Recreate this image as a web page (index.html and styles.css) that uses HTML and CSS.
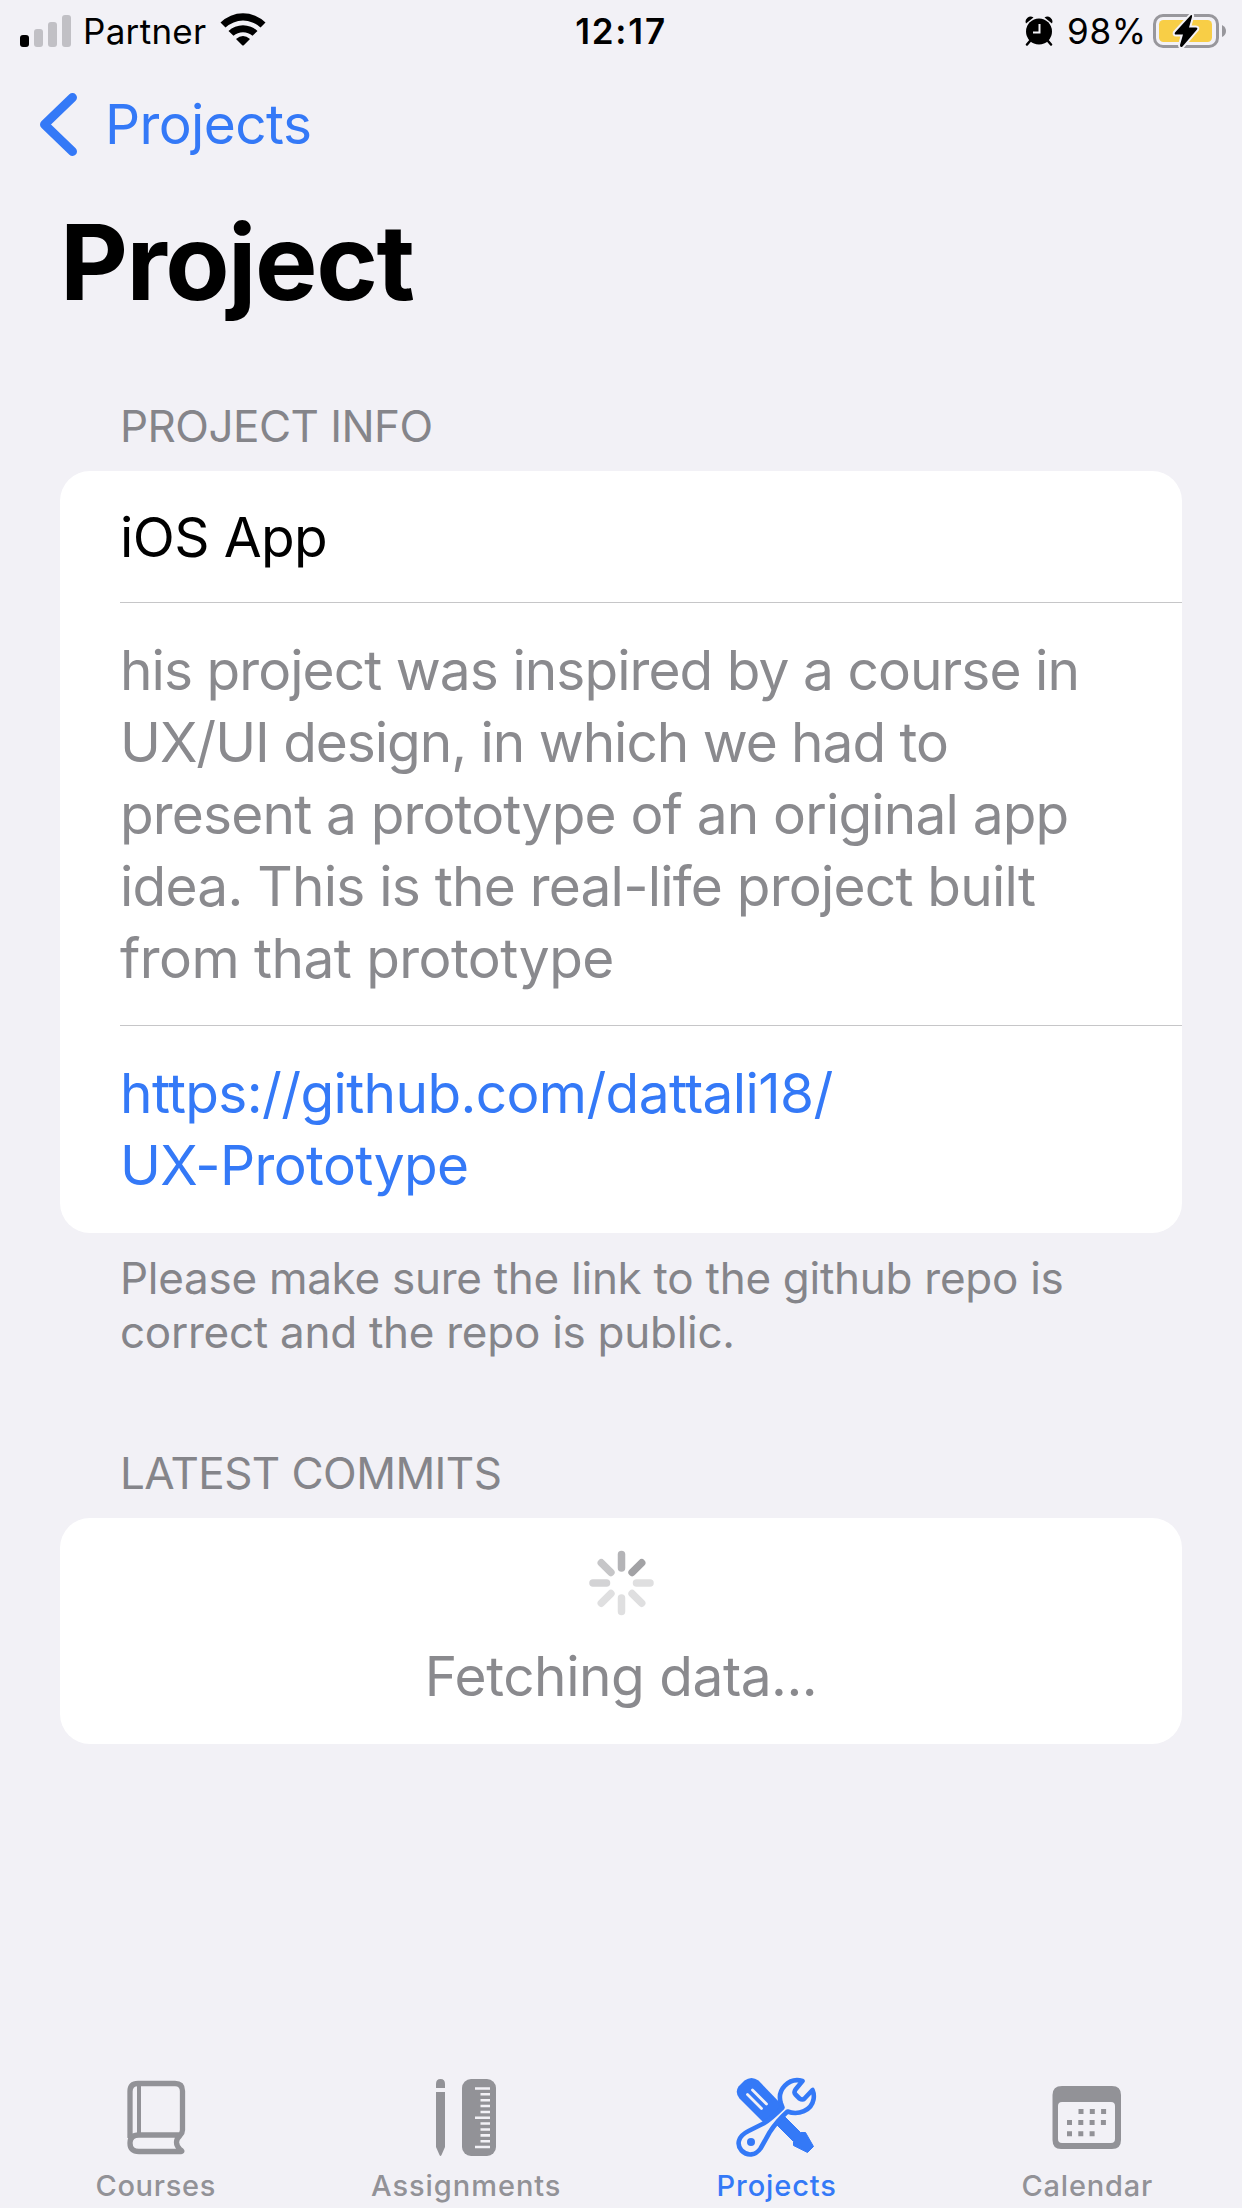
FILE: index.html
```html
<!DOCTYPE html>
<html lang="en">
<head>
<meta charset="utf-8">
<title>Project</title>
<link rel="stylesheet" href="styles.css">
</head>
<body>
<div class="app">
  <header class="status">
    <div class="status-left">
      <svg class="signal" width="51" height="32" viewBox="0 0 51 32"><rect y="20" width="9" height="12" rx="3"/><g fill="#c1c0c5"><rect x="14" y="14" width="9" height="18" rx="3"/><rect x="28" y="7" width="9" height="25" rx="3"/><rect x="42" y="0" width="9" height="32" rx="3"/></g></svg>
      <span class="carrier">Partner</span>
      <svg class="wifi" width="46" height="33" viewBox="0 0 46 33"><path d="M0.5 9.500A32 32 0 0 1 45.500 9.500L40.500 14.500A25.700 25.700 0 0 0 5.500 14.500ZM8.500 18A21 21 0 0 1 37.500 18L32.500 22.800A14.500 14.500 0 0 0 13.500 22.800ZM16 26Q23 20 30 26L24 32Q23 33 22 32Z"/></svg>
    </div>
    <span class="time">12:17</span>
    <div class="status-right">
      <svg class="alarm" width="28" height="30" viewBox="0 0 28 30"><circle cx="14" cy="15.500" r="13"/><path d="M1 7.500A5 5 0 0 1 8.500 1.500ZM27 7.500A5 5 0 0 0 19.500 1.500Z"/><path d="M5 25L2 28.500M23 25L26 28.500" stroke="#000" stroke-width="2.500" stroke-linecap="round"/><path d="M14.500 8V16.500H8" fill="none" stroke="#f2f1f6" stroke-width="2"/></svg>
      <span class="percent">98%</span>
      <svg class="battery" width="74" height="36" viewBox="0 0 74 36"><rect x="1.500" y="2.500" width="63" height="31" rx="8.500" fill="none" stroke="#98979c" stroke-width="3"/><path d="M69 12Q73 14 73 18Q73 22 69 24Z" fill="#98979c"/><rect x="6" y="7" width="53" height="22" rx="4.500" fill="#f8ce46"/><path d="M38 2L22 19.500Q21 21.500 23 21.500H30L27 32Q27 35 29.500 33.500L44 16.500Q45 14.500 43 14.500H36L39 4Q39.500 1.500 38 2Z" fill="#000" stroke="#f2f1f6" stroke-width="4" paint-order="stroke"/></svg>
    </div>
  </header>
  <nav class="nav">
    <svg width="38" height="64" viewBox="0 0 38 64"><path d="M32.500 4.500L4.500 31.500L32.500 58.500" fill="none" stroke="#3479f7" stroke-width="9" stroke-linecap="round" stroke-linejoin="round"/></svg>
    <a class="back">Projects</a>
  </nav>
  <main class="content">
    <h1 class="title">Project</h1>
    <h2 class="section-title info">PROJECT INFO</h2>
    <section class="card">
      <div class="row name">iOS App</div>
      <div class="row description"><span class="l1">his project was inspired by a course in</span><br><span class="l2">UX/UI design, in which we had to</span><br><span class="l3">present a prototype of an original app</span><br><span class="l4">idea. This is the real-life project built</span><br><span class="l5">from that prototype</span></div>
      <a class="row link">https://github.com/dattali18/<br>UX-Prototype</a>
    </section>
    <p class="note">Please make sure the link to the github repo is<br>correct and the repo is public.</p>
    <h2 class="section-title commits">LATEST COMMITS</h2>
    <section class="card loading">
      <svg width="66" height="66" viewBox="-33.5 -33 66 66" stroke-width="7.500" stroke-linecap="round"><path d="M0 -15V-28.500" stroke="#b4b4b7"/><path d="M10.600 -10.600L20.200 -20.200" stroke="#a2a2a5"/><path d="M15 0H28.500M10.600 10.600L20.200 20.200M0 15V28.500M-10.600 10.600L-20.200 20.200" stroke="#dfdfe0"/><path d="M-15 0H-28.500" stroke="#d3d3d5"/><path d="M-10.600 -10.600L-20.200 -20.200" stroke="#c6c6c8"/></svg>
      <span class="fetching">Fetching data...</span>
    </section>
  </main>
  <footer class="tabs">
    <a class="tab">
      <svg width="82" height="86" viewBox="0 0 82 86" fill="none" stroke="currentColor"><path d="M15 63V16.500Q15 8.500 23 8.500H60Q67.500 8.500 67.500 16V55Q67.500 58 65 60.500Q58 67 65 74.500Q68 76.500 66 76.500H24Q15 76.500 15 68Q15 60 24 60H65" stroke-width="5.300" stroke-linejoin="round"/><path d="M24 9V60" stroke-width="4"/></svg>
      <span class="t1">Courses</span>
    </a>
    <a class="tab">
      <svg width="82" height="86" viewBox="0 0 82 86"><path d="M11 13V9Q11 4 15.500 4Q20 4 20 9V13ZM11 17H20V72L16.500 80Q15.500 82 14.500 80L11 72Z" fill="currentColor"/><rect x="37" y="4" width="34" height="77" rx="9" fill="currentColor"/><path d="M50 13.500H65M55.500 19.300H65M55.500 25.200H65M55.500 31H65M55.500 37H65M50 42.700H65M55.500 48.500H65M55.500 54.500H65M55.500 60.400H65M55.500 66.200H65M50 72H65" stroke="#f2f1f6" stroke-width="2.600"/></svg>
      <span class="t2">Assignments</span>
    </a>
    <a class="tab active">
      <svg width="82" height="86" viewBox="0.5 0.5 82 86"><path d="M3 12L9 6Q16 1 23 6L48 32L29 49L4 24Q-1 18 3 12Z" fill="currentColor"/><path d="M12 20L26 34M17 15.500L31 29.500" stroke="#f2f1f6" stroke-width="2.800" stroke-linecap="round"/><path d="M40 49L48 41L65 58H70L78 72L72 78L58 71V67Z" fill="currentColor" stroke="currentColor" stroke-width="1" stroke-linejoin="round"/><path d="M67 6.500A17.500 17.500 0 0 0 45.500 29L47 33Q36 44 28 49L13 56.500C2 62 1 70 6 76C12 82 20 81 25 74L34 58Q41 47 52 37C63 41 76 36 78 25Q79 20 77 15.500L69 24Q67 26 64 24L60 20Q58 18 60 15Z" fill="#f2f1f6" stroke="currentColor" stroke-width="4.600" stroke-linejoin="round"/><circle cx="15.500" cy="67.500" r="4" fill="currentColor"/></svg>
      <span class="t3">Projects</span>
    </a>
    <a class="tab">
      <svg width="82" height="86" viewBox="0 0 82 86"><path fill-rule="evenodd" d="M16 11H66Q75 11 75 20V65Q75 74 66 74H15Q6.500 74 6.500 65V20Q6.500 11 16 11ZM16 27Q12 27 12 31V64Q12 68 16 68H65Q69 68 69 64V31Q69 27 65 27Z" fill="currentColor"/><path d="M32.500 36.500H62M21 47.500H62M21 58.800H51" stroke="currentColor" stroke-width="5" stroke-dasharray="5 6.300"/></svg>
      <span class="t4">Calendar</span>
    </a>
  </footer>
</div>
</body>
</html>
```
FILE: styles.css
```css
* { box-sizing: border-box; }
body { margin: 0; background: #f2f1f6; color: #000; font-family: Inter, "Liberation Sans", sans-serif; }
.app { width: 1242px; height: 2208px; display: flex; flex-direction: column; overflow: hidden; }
svg { display: block; flex: none; }
span, a { white-space: nowrap; }
.status { height: 60px; display: grid; grid-template-columns: 1fr auto 1fr; align-items: center; padding: 0 15px; font-size: 35px; line-height: 60px; }
.status-left, .status-right { display: flex; align-items: center; height: 60px; }
.status-left { padding-left: 5px; }
.status-right { justify-content: flex-end; }
.carrier { margin: 0 13px 0 12px; letter-spacing: 0.3px; padding-top: 1px; }
.wifi { margin-top: -2px; }
.time { font-weight: 600; letter-spacing: 1.8px; padding-top: 1px; }
.alarm { margin-top: 1px; }
.percent { margin: 0 6px 0 14px; letter-spacing: 0.8px; padding-top: 1px; }
.nav { height: 129px; display: flex; align-items: center; padding-left: 40px; gap: 27px; color: #3479f7; font-size: 55px; letter-spacing: -0.6px; }
.back { padding-bottom: 1px; }
.content { flex: 1; padding: 0 60px; }
.title { margin: 0; height: 150px; font-size: 105px; line-height: 146px; font-weight: 700; letter-spacing: -1.5px; }
.section-title { margin: 0; padding-left: 60px; font-size: 44px; line-height: 54px; font-weight: 400; color: #85858a; letter-spacing: -0.55px; }
.info { padding-top: 60px; height: 132px; }
.card { background: #fff; border-radius: 30px; }
.row { display: block; margin-left: 60px; font-size: 55px; line-height: 72px; letter-spacing: -0.62px; }
.name { height: 132px; padding-top: 30px; border-bottom: 1px solid #c6c6c8; }
.description { height: 423px; padding-top: 31px; color: #8a8a8e; border-bottom: 1px solid #c6c6c8; }
.l1 { letter-spacing: -0.94px; }
.l2 { letter-spacing: -1.04px; }
.l3 { letter-spacing: -0.83px; }
.l4 { letter-spacing: -0.77px; }
.l5 { letter-spacing: -0.55px; }
.link { height: 207px; padding-top: 31px; color: #3479f7; }
.note { margin: 0; padding: 18px 0 0 60px; height: 213px; font-size: 44px; line-height: 54px; color: #85858a; letter-spacing: -0.27px; }
.commits { height: 72px; }
.loading { height: 226px; display: flex; flex-direction: column; align-items: center; padding-top: 32px; color: #8a8a8e; font-size: 55px; line-height: 72px; gap: 24px; }
.fetching { letter-spacing: -0.47px; }
.tabs { height: 138px; display: grid; grid-template-columns: repeat(4, 1fr); color: #929297; font-size: 29px; line-height: 36px; font-weight: 500; }
.tab { display: flex; flex-direction: column; align-items: center; padding: 5px 0 0 1px; gap: 7px; }
.t1 { letter-spacing: 0.7px; }
.t2 { letter-spacing: 0.95px; }
.t3 { letter-spacing: 0.9px; }
.t4 { letter-spacing: 0.8px; }
.active { color: #3479f7; }
```
